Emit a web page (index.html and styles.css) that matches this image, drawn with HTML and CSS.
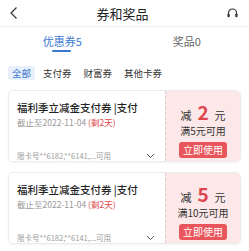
FILE: index.html
```html
<!DOCTYPE html>
<html>
<head>
<meta charset="utf-8">
<link rel="stylesheet" href="styles.css">
</head>
<body>
<div class="page">
  <div class="header">
    <svg class="back" width="10" height="14" viewBox="0 0 10 14"><path d="M7.5 1.5 L2 7 L7.5 12.5" fill="none" stroke="#333" stroke-width="1.2"/></svg>
    <div class="title">券和奖品</div>
    <svg class="service" width="13" height="12" viewBox="0 0 13 12"><path d="M2.5 8.5 V6 A4 4 0 0 1 10.5 6 V8.5" fill="none" stroke="#333" stroke-width="1.2"/><rect x="1.5" y="6.8" width="2.2" height="3.4" rx="0.8" fill="#333"/><rect x="9.3" y="6.8" width="2.2" height="3.4" rx="0.8" fill="#333"/></svg>
  </div>
  <div class="tabs">
    <div class="tab active">优惠券5</div>
    <div class="tab">奖品0</div>
  </div>
  <div class="filters">
    <span class="chip on">全部</span>
    <span class="chip">支付券</span>
    <span class="chip">财富券</span>
    <span class="chip">其他卡券</span>
  </div>
  <div class="list">
    <div class="card">
      <div class="left">
        <div class="name">福利季立减金支付券 |支付</div>
        <div class="date">截止至2022-11-04 <span class="remain">(剩2天)</span></div>
        <div class="foot"><span>限卡号**6182,**6141,...可用</span>
          <svg width="9" height="6" viewBox="0 0 9 6"><path d="M1 1 L4.5 4.5 L8 1" fill="none" stroke="#555" stroke-width="1"/></svg></div>
      </div>
      <div class="right">
        <div class="amt">减<b>2</b>元</div>
        <div class="cond">满5元可用</div>
        <div class="btn">立即使用</div>
      </div>
    </div>
    <div class="card">
      <div class="left">
        <div class="name">福利季立减金支付券 |支付</div>
        <div class="date">截止至2022-11-04 <span class="remain">(剩2天)</span></div>
        <div class="foot"><span>限卡号**6182,**6141,...可用</span>
          <svg width="9" height="6" viewBox="0 0 9 6"><path d="M1 1 L4.5 4.5 L8 1" fill="none" stroke="#555" stroke-width="1"/></svg></div>
      </div>
      <div class="right">
        <div class="amt">减<b>5</b>元</div>
        <div class="cond">满10元可用</div>
        <div class="btn">立即使用</div>
      </div>
    </div>
  </div>
</div>
</body>
</html>
```
FILE: styles.css
```css
* { box-sizing: border-box; }
html, body { margin: 0; padding: 0; }
body {
  font-family: "Noto Sans CJK SC", "Noto Sans", sans-serif;
  background: #fff;
  color: #222;
  width: 249px;
  height: 251px;
  overflow: hidden;
}
.header {
  height: 27px;
  display: flex;
  align-items: center;
  justify-content: space-between;
  padding: 0 10px 0 9px;
  border-bottom: 1px solid #f0f0f0;
}
.title { font-size: 13px; line-height: 1; color: #222; }
.tabs {
  display: flex;
  height: 28px;
}
.tab {
  flex: 1;
  display: flex;
  justify-content: center;
  align-items: center;
  font-size: 11px;
  color: #666;
  position: relative;
}
.tab.active { color: #3a78d0; }
.tab.active::after {
  content: "";
  position: absolute;
  bottom: 3px;
  left: 50%;
  width: 19px;
  margin-left: -10px;
  height: 2px;
  background: #3a78d0;
  border-radius: 1px;
}
.filters {
  display: flex;
  gap: 4px;
  padding: 11px 8px 0;
  align-items: center;
}
.chip {
  font-size: 9.5px;
  line-height: 14px;
  padding: 0 4px;
  color: #333;
  border-radius: 2px;
}
.chip.on { background: #e8f0fb; color: #3a78d0; }
.list {
  display: flex;
  flex-direction: column;
  gap: 10px;
  padding: 10px 8px 0;
}
.card {
  display: flex;
  height: 72px;
  border-radius: 5px;
  border: 1px solid #ececec;
  box-shadow: 0 1px 3px rgba(0,0,0,0.05);
  overflow: hidden;
}
.left {
  width: 156px;
  padding: 10px 8px 0 8px;
  display: flex;
  flex-direction: column;
  background: #fff;
}
.name { font-size: 10.5px; font-weight: 500; line-height: 14px; color: #222; white-space: nowrap; }
.date { font-size: 8.5px; color: #999; line-height: 11px; margin-top: 2px; white-space: nowrap; }
.remain { color: #e0474c; }
.foot {
  margin-top: auto;
  margin-bottom: 0;
  display: flex;
  justify-content: space-between;
  align-items: center;
  font-size: 7.5px;
  color: #999;
  line-height: 11px;
  white-space: nowrap;
}
.foot svg { margin-right: 2px; }
.right {
  flex: 1;
  background: #fce8e8;
  border-left: 1px dashed #e6c9c9;
  display: flex;
  flex-direction: column;
  align-items: center;
  padding-top: 11px;
}
.amt { font-size: 11px; color: #333; line-height: 20px; display: flex; align-items: baseline; }
.amt b { font-size: 19px; color: #e0474c; font-weight: 700; margin: 0 6px; }
.cond { font-size: 10px; color: #333; line-height: 12px; }
.btn {
  margin-top: 5px;
  background: #e8565b;
  color: #fff;
  font-size: 10px;
  line-height: 16px;
  padding: 0 4px;
  border-radius: 3px;
}
```
